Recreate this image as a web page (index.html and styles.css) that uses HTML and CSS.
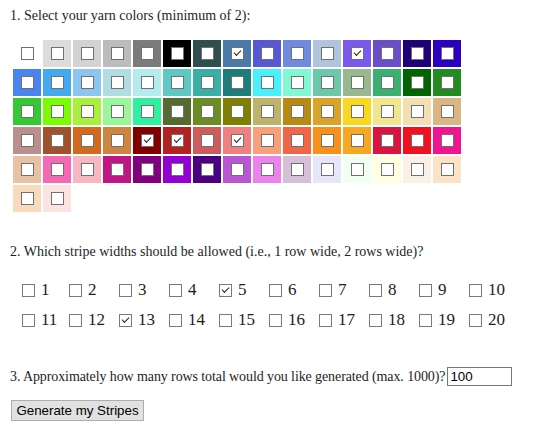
FILE: index.html
```html
<!DOCTYPE html>
<html>
<head>
<meta charset="utf-8">
<link rel="stylesheet" href="styles.css">
</head>
<body>
<p class="q q1">1. Select your yarn colors (minimum of 2):</p>
<div class="swatches">
<label class="sw" style="background:#ffffff"><input type="checkbox"></label>
<label class="sw" style="background:#dcdcdc"><input type="checkbox"></label>
<label class="sw" style="background:#d3d3d3"><input type="checkbox"></label>
<label class="sw" style="background:#bcbcbc"><input type="checkbox"></label>
<label class="sw" style="background:#7b7b7b"><input type="checkbox"></label>
<label class="sw" style="background:#000000"><input type="checkbox"></label>
<label class="sw" style="background:#2f4f4f"><input type="checkbox"></label>
<label class="sw" style="background:#4a7aaa"><input type="checkbox" checked></label>
<label class="sw" style="background:#5858d4"><input type="checkbox"></label>
<label class="sw" style="background:#708ae0"><input type="checkbox"></label>
<label class="sw" style="background:#b0c4de"><input type="checkbox"></label>
<label class="sw" style="background:#7b58ee"><input type="checkbox" checked></label>
<label class="sw" style="background:#6a4ec8"><input type="checkbox"></label>
<label class="sw" style="background:#1e0078"><input type="checkbox"></label>
<label class="sw" style="background:#2c00c0"><input type="checkbox"></label>

<label class="sw" style="background:#4a84ee"><input type="checkbox"></label>
<label class="sw" style="background:#44aaf0"><input type="checkbox"></label>
<label class="sw" style="background:#8cc4f2"><input type="checkbox"></label>
<label class="sw" style="background:#b0dce4"><input type="checkbox"></label>
<label class="sw" style="background:#b4ecee"><input type="checkbox"></label>
<label class="sw" style="background:#5ec8c2"><input type="checkbox"></label>
<label class="sw" style="background:#38b0a8"><input type="checkbox"></label>
<label class="sw" style="background:#1e7c7a"><input type="checkbox"></label>
<label class="sw" style="background:#48f0fc"><input type="checkbox"></label>
<label class="sw" style="background:#80f8d4"><input type="checkbox"></label>
<label class="sw" style="background:#6cc8aa"><input type="checkbox"></label>
<label class="sw" style="background:#98b890"><input type="checkbox"></label>
<label class="sw" style="background:#3cb070"><input type="checkbox"></label>
<label class="sw" style="background:#006400"><input type="checkbox"></label>
<label class="sw" style="background:#228b22"><input type="checkbox"></label>

<label class="sw" style="background:#34c834"><input type="checkbox"></label>
<label class="sw" style="background:#7cfc00"><input type="checkbox"></label>
<label class="sw" style="background:#a8f03c"><input type="checkbox"></label>
<label class="sw" style="background:#98f898"><input type="checkbox"></label>
<label class="sw" style="background:#30f0a0"><input type="checkbox"></label>
<label class="sw" style="background:#556b2f"><input type="checkbox"></label>
<label class="sw" style="background:#6b8e23"><input type="checkbox"></label>
<label class="sw" style="background:#808000"><input type="checkbox"></label>
<label class="sw" style="background:#bcb46c"><input type="checkbox"></label>
<label class="sw" style="background:#b88a14"><input type="checkbox"></label>
<label class="sw" style="background:#daa428"><input type="checkbox"></label>
<label class="sw" style="background:#f8d820"><input type="checkbox"></label>
<label class="sw" style="background:#f0e690"><input type="checkbox"></label>
<label class="sw" style="background:#f4dfb4"><input type="checkbox"></label>
<label class="sw" style="background:#dab682"><input type="checkbox"></label>

<label class="sw" style="background:#bc8f8f"><input type="checkbox"></label>
<label class="sw" style="background:#a0522d"><input type="checkbox"></label>
<label class="sw" style="background:#d2691e"><input type="checkbox"></label>
<label class="sw" style="background:#cd853f"><input type="checkbox"></label>
<label class="sw" style="background:#800000"><input type="checkbox" checked></label>
<label class="sw" style="background:#b22222"><input type="checkbox" checked></label>
<label class="sw" style="background:#cd5c5c"><input type="checkbox"></label>
<label class="sw" style="background:#f08080"><input type="checkbox" checked></label>
<label class="sw" style="background:#f8a07a"><input type="checkbox"></label>
<label class="sw" style="background:#f06646"><input type="checkbox"></label>
<label class="sw" style="background:#f8901c"><input type="checkbox"></label>
<label class="sw" style="background:#f8a820"><input type="checkbox"></label>
<label class="sw" style="background:#d81440"><input type="checkbox"></label>
<label class="sw" style="background:#f01020"><input type="checkbox"></label>
<label class="sw" style="background:#f01490"><input type="checkbox"></label>

<label class="sw" style="background:#e8c2a2"><input type="checkbox"></label>
<label class="sw" style="background:#f468b4"><input type="checkbox"></label>
<label class="sw" style="background:#f8b6c0"><input type="checkbox"></label>
<label class="sw" style="background:#c21585"><input type="checkbox"></label>
<label class="sw" style="background:#800080"><input type="checkbox"></label>
<label class="sw" style="background:#9400d3"><input type="checkbox"></label>
<label class="sw" style="background:#4b0082"><input type="checkbox"></label>
<label class="sw" style="background:#ba55d3"><input type="checkbox"></label>
<label class="sw" style="background:#ec82ec"><input type="checkbox"></label>
<label class="sw" style="background:#d8bfd8"><input type="checkbox"></label>
<label class="sw" style="background:#e6e6fa"><input type="checkbox"></label>
<label class="sw" style="background:#f0fff0"><input type="checkbox"></label>
<label class="sw" style="background:#ffffe0"><input type="checkbox"></label>
<label class="sw" style="background:#faf0e6"><input type="checkbox"></label>
<label class="sw" style="background:#fde3c6"><input type="checkbox"></label>

<label class="sw" style="background:#fadabc"><input type="checkbox"></label>
<label class="sw" style="background:#fbe4df"><input type="checkbox"></label>
</div>

<p class="q q2">2. Which stripe widths should be allowed (i.e., 1 row wide, 2 rows wide)?</p>
<div class="widths">
<label class="w"><input type="checkbox"><span>1</span></label>
<label class="w"><input type="checkbox"><span>2</span></label>
<label class="w"><input type="checkbox"><span>3</span></label>
<label class="w"><input type="checkbox"><span>4</span></label>
<label class="w"><input type="checkbox" checked><span>5</span></label>
<label class="w"><input type="checkbox"><span>6</span></label>
<label class="w"><input type="checkbox"><span>7</span></label>
<label class="w"><input type="checkbox"><span>8</span></label>
<label class="w"><input type="checkbox"><span>9</span></label>
<label class="w"><input type="checkbox"><span>10</span></label>
<label class="w"><input type="checkbox"><span>11</span></label>
<label class="w"><input type="checkbox"><span>12</span></label>
<label class="w"><input type="checkbox" checked><span>13</span></label>
<label class="w"><input type="checkbox"><span>14</span></label>
<label class="w"><input type="checkbox"><span>15</span></label>
<label class="w"><input type="checkbox"><span>16</span></label>
<label class="w"><input type="checkbox"><span>17</span></label>
<label class="w"><input type="checkbox"><span>18</span></label>
<label class="w"><input type="checkbox"><span>19</span></label>
<label class="w"><input type="checkbox"><span>20</span></label>
</div>

<div class="rows">
<span class="q q3">3. Approximately how many rows total would you like generated (max. 1000)?</span>
<input class="num" type="text" value="100">
</div>

<button class="go" type="button">Generate my Stripes</button>
</body>
</html>
```
FILE: styles.css
```css
html, body {
  margin: 0;
  padding: 0;
  background: #ffffff;
}
body {
  padding: 8px 10px;
  font-family: "Liberation Serif", "Times New Roman", serif;
  color: #1e1e1e;
}
.q {
  font-size: 14px;
  line-height: 16px;
  margin: 0;
}
.q3 {
  letter-spacing: -0.1px;
}
.swatches {
  margin: 16px 0 0 3px;
  display: grid;
  grid-template-columns: repeat(15, 28px);
  grid-auto-rows: 27px;
  gap: 2px;
}
.sw {
  display: flex;
  align-items: center;
  justify-content: center;
}
input[type="checkbox"] {
  -webkit-appearance: none;
  appearance: none;
  margin: 0;
  width: 13px;
  height: 13px;
  box-sizing: border-box;
  border: 1px solid #707070;
  background: #ffffff;
  position: relative;
  flex: none;
}
input[type="checkbox"]:checked::after {
  content: "";
  position: absolute;
  left: 2px;
  top: 2px;
  width: 6px;
  height: 3px;
  border-left: 1.6px solid #222;
  border-bottom: 1.6px solid #222;
  transform: rotate(-45deg);
}
.q2 {
  margin-top: 32px;
}
.widths {
  margin: 15px 0 0 12px;
  display: grid;
  grid-template-columns: 47px repeat(9, 50px);
  grid-auto-rows: 30px;
}
.w {
  display: flex;
  align-items: center;
  font-size: 17px;
}
.w input {
  border-color: #7a7a7a;
}
.w span {
  margin-left: 6px;
}
.rows {
  margin-top: 32px;
  display: flex;
  align-items: center;
  height: 19px;
}
.num {
  margin: 0 0 0 2px;
  width: 65px;
  height: 19px;
  box-sizing: border-box;
  border: 1px solid #767676;
  padding: 0 2px;
  font-family: "Liberation Sans", Arial, sans-serif;
  font-size: 13.33px;
  color: #000;
  background: #fff;
}
.go {
  display: block;
  margin: 14px 0 0 1px;
  width: 133px;
  height: 21px;
  padding: 0;
  background: #e1e1e1;
  border: 1px solid #adadad;
  border-radius: 0;
  font-family: "Liberation Sans", Arial, sans-serif;
  font-size: 13.33px;
  color: #000;
}
```
